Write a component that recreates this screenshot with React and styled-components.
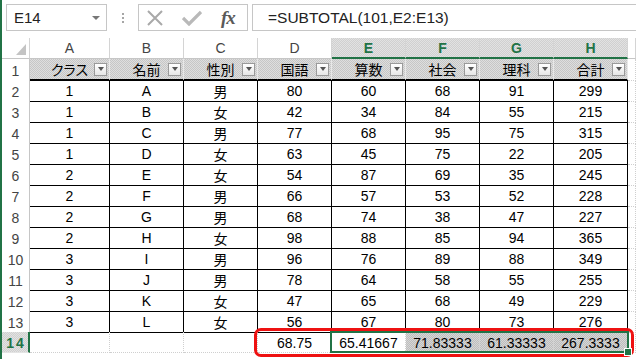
import React from "react";
import styled, { createGlobalStyle, css } from "styled-components";

const GREEN = "#217346";

const GlobalStyle = createGlobalStyle`
  html, body {
    margin: 0;
    padding: 0;
    background: #fff;
  }
  body {
    font-family: "Liberation Sans", "Noto Sans CJK JP", sans-serif;
    overflow: hidden;
  }
`;

const dotted = (a, b) => css`
  background: repeating-conic-gradient(${a} 0 25%, ${b} 0 50%) 0 0 / 2px 2px;
`;

const Window = styled.div`
  width: 636px;
  height: 359px;
  box-sizing: border-box;
  border-left: 2px solid ${GREEN};
  display: flex;
  flex-direction: column;
  overflow: hidden;
`;

const FormulaBar = styled.div`
  display: flex;
  align-items: flex-start;
  height: 38px;
  box-sizing: border-box;
  padding: 4px 0 0 4px;
  flex-shrink: 0;
`;

const NameBox = styled.div`
  width: 101px;
  height: 27px;
  box-sizing: border-box;
  border: 1px solid #c6c6c6;
  display: flex;
  align-items: center;
  justify-content: space-between;
  padding: 0 6px 0 7px;
  font-size: 15px;
  color: #222;
`;

const Caret = styled.span`
  width: 0;
  height: 0;
  border-left: 4px solid transparent;
  border-right: 4px solid transparent;
  border-top: 4px solid #777;
`;

const Grip = styled.div`
  width: 4px;
  height: 27px;
  margin: 0 13px 0 14px;
  display: flex;
  flex-direction: column;
  align-items: center;
  justify-content: center;
  gap: 2px;
  span {
    width: 2px;
    height: 2px;
    background: #a6a6a6;
  }
`;

const FxBox = styled.div`
  width: 110px;
  height: 27px;
  box-sizing: border-box;
  border: 1px solid #c6c6c6;
  display: flex;
  align-items: center;
  padding: 0 0 0 8px;
  gap: 19px;
`;

const FxLabel = styled.span`
  font-family: "Liberation Serif", serif;
  font-style: italic;
  font-weight: bold;
  font-size: 19px;
  color: #5a5a5a;
  letter-spacing: -1px;
`;

const FormulaInput = styled.div`
  flex: 1;
  height: 27px;
  margin: 0 -10px 0 4px;
  box-sizing: border-box;
  border: 1px solid #c6c6c6;
  display: flex;
  align-items: center;
  padding-left: 15px;
  font-size: 15.5px;
  color: #222;
`;

const Sheet = styled.div`
  display: flex;
  flex-direction: column;
  font-size: 14px;
  color: #000;
`;

const Row = styled.div`
  display: grid;
  grid-template-columns: 28px 80px repeat(7, 74px) 1fr;
  height: 21px;
  position: relative;
`;

const Corner = styled.div`
  box-sizing: border-box;
  border-right: 1px solid #d4d4d4;
  border-bottom: 1px solid #c6c6c6;
  display: flex;
  align-items: flex-end;
  justify-content: flex-end;
  padding: 0 3px 3px 0;
`;

const ColHeader = styled.div`
  box-sizing: border-box;
  display: flex;
  align-items: center;
  justify-content: center;
  border-right: 1px solid #d4d4d4;
  color: #444;
  ${(p) =>
    p.$active
      ? css`
          ${dotted("#d0d0d0", "#e2e2e2")};
          color: ${GREEN};
          font-weight: bold;
          border-bottom: 2px solid ${GREEN};
        `
      : css`
          background: #fff;
          border-bottom: 1px solid #c6c6c6;
        `}
`;

const RowHeader = styled.div`
  box-sizing: border-box;
  display: flex;
  align-items: center;
  justify-content: center;
  padding-top: 2px;
  border-bottom: 1px solid #e4e4e4;
  color: #444;
  ${(p) =>
    p.$active
      ? css`
          ${dotted("#d0d0d0", "#e2e2e2")};
          color: ${GREEN};
          font-weight: bold;
          letter-spacing: 2px;
          padding-left: 2px;
          border-right: 2px solid ${GREEN};
        `
      : css`
          background: #fff;
          border-right: 1px solid #c6c6c6;
        `}
`;

const TotalRowHeader = styled(RowHeader)`
  grid-row: 1;
  grid-column: 1;
`;

const HeadCell = styled.div`
  box-sizing: border-box;
  ${dotted("#c6c6c6", "#dedede")};
  border-right: 1px solid #e8e8e8;
  border-bottom: 2px solid #000;
  display: grid;
  grid-template-columns: 1fr 13px;
  align-items: center;
  padding: 0 2px 0 15px;
  font-feature-settings: "palt";
  span {
    text-align: center;
  }
`;

const FilterButton = styled.div`
  width: 13px;
  height: 13px;
  box-sizing: border-box;
  border: 1px solid #9a9a9a;
  background: linear-gradient(#ffffff, #e6e6e6);
  display: flex;
  align-items: center;
  justify-content: center;
  &::after {
    content: "";
    width: 0;
    height: 0;
    border-left: 3px solid transparent;
    border-right: 3px solid transparent;
    border-top: 4px solid #555;
  }
`;

const DataCell = styled.div`
  box-sizing: border-box;
  display: flex;
  align-items: center;
  justify-content: center;
  padding-top: 1px;
  border-right: 1px solid #000;
  border-bottom: 1px solid #000;
`;

const BlankCell = styled.div`
  box-sizing: border-box;
  border-right: 1px dotted #cfcfcf;
  border-bottom: 1px dotted #cfcfcf;
`;

const TotalCell = styled.div`
  grid-row: 1;
  grid-column: ${(p) => p.$col};
  box-sizing: border-box;
  display: flex;
  align-items: center;
  justify-content: center;
  padding-top: 1px;
  border-right: 1px dotted #cfcfcf;
  border-bottom: 1px dotted #cfcfcf;
  ${(p) => p.$shade && dotted("#bdbdbd", "#d6d6d6")};
`;

const Selection = styled.div`
  grid-row: 1;
  grid-column: 6 / 10;
  margin: -1px -1px 0 -2px;
  border: 2px solid ${GREEN};
  position: relative;
  pointer-events: none;
`;

const FillHandle = styled.div`
  position: absolute;
  right: -5px;
  bottom: -5px;
  width: 6px;
  height: 6px;
  background: ${GREEN};
  border: 1px solid #fff;
`;

const Callout = styled.div`
  grid-row: 1;
  grid-column: 5 / 10;
  margin: -4px -6px -4px -4px;
  border: 3px solid #ee1111;
  border-radius: 7px;
  pointer-events: none;
`;

const letters = ["A", "B", "C", "D", "E", "F", "G", "H"];
const heads = ["クラス", "名前", "性別", "国語", "算数", "社会", "理科", "合計"];
const rows = [
  [1, "A", "男", 80, 60, 68, 91, 299],
  [1, "B", "女", 42, 34, 84, 55, 215],
  [1, "C", "男", 77, 68, 95, 75, 315],
  [1, "D", "女", 63, 45, 75, 22, 205],
  [2, "E", "女", 54, 87, 69, 35, 245],
  [2, "F", "男", 66, 57, 53, 52, 228],
  [2, "G", "男", 68, 74, 38, 47, 227],
  [2, "H", "女", 98, 88, 85, 94, 365],
  [3, "I", "男", 96, 76, 89, 88, 349],
  [3, "J", "男", 78, 64, 58, 55, 255],
  [3, "K", "女", 47, 65, 68, 49, 229],
  [3, "L", "女", 56, 67, 80, 73, 276],
];
const totals = ["", "", "", "68.75", "65.41667", "71.83333", "61.33333", "267.3333"];

const CrossIcon = () => (
  <svg width="16" height="16" viewBox="0 0 16 16">
    <path d="M1 1L15 15M15 1L1 15" stroke="#a9a9a9" strokeWidth="2" fill="none" />
  </svg>
);

const CheckIcon = () => (
  <svg width="20" height="16" viewBox="0 0 20 16">
    <path d="M1 8L7 14L19 2" stroke="#b9b9b9" strokeWidth="3.2" fill="none" />
  </svg>
);

export default function App() {
  return (
    <>
      <GlobalStyle />
      <Window>
        <FormulaBar>
          <NameBox>
            E14
            <Caret />
          </NameBox>
          <Grip>
            <span />
            <span />
            <span />
          </Grip>
          <FxBox>
            <CrossIcon />
            <CheckIcon />
            <FxLabel>fx</FxLabel>
          </FxBox>
          <FormulaInput>=SUBTOTAL(101,E2:E13)</FormulaInput>
        </FormulaBar>

        <Sheet>
          <Row>
            <Corner>
              <svg width="10" height="11" viewBox="0 0 10 11">
                <polygon points="10,0 10,11 0,11" fill="#c4c4c4" />
              </svg>
            </Corner>
            {letters.map((l, i) => (
              <ColHeader key={l} $active={i >= 4}>
                {l}
              </ColHeader>
            ))}
            <ColHeader />
          </Row>

          <Row>
            <RowHeader>1</RowHeader>
            {heads.map((h) => (
              <HeadCell key={h}>
                <span>{h}</span>
                <FilterButton />
              </HeadCell>
            ))}
            <BlankCell />
          </Row>

          {rows.map((r, ri) => (
            <Row key={ri}>
              <RowHeader>{ri + 2}</RowHeader>
              {r.map((v, ci) => (
                <DataCell key={ci}>{v}</DataCell>
              ))}
              <BlankCell />
            </Row>
          ))}

          <Row>
            <TotalRowHeader $active>14</TotalRowHeader>
            {totals.map((t, i) => (
              <TotalCell key={i} $col={i + 2} $shade={i >= 5}>
                {t}
              </TotalCell>
            ))}
            <TotalCell $col={10} />
            <Selection>
              <FillHandle />
            </Selection>
            <Callout />
          </Row>
        </Sheet>
      </Window>
    </>
  );
}
